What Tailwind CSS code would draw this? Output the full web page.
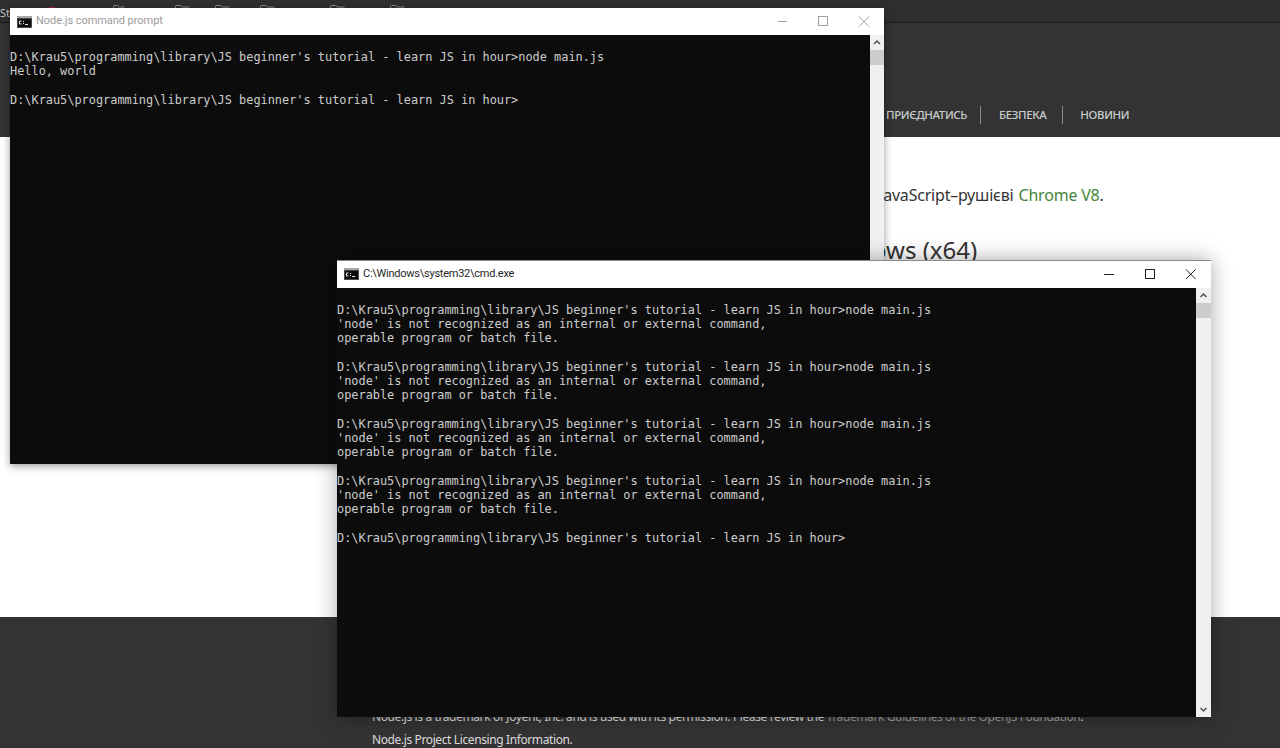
<!DOCTYPE html>
<html lang="en">
<head>
    <meta charset="UTF-8">
    <title>Node.js command prompt</title>
    <script src="https://cdn.jsdelivr.net/npm/@tailwindcss/browser@4"></script>
</head>
<body class="bg-white overflow-hidden">
    <div class="relative w-[1280px] h-[748px] overflow-hidden font-['Noto_Sans',sans-serif]">

        <!-- Browser page behind the windows -->
        <div class="flex flex-col h-full">
            <div class="relative h-[23px] flex-none bg-[#2f2f2f] border-b border-[#1a1a1a] text-[11px] text-[#c8c8c8] leading-[26px]">
                St
                <!-- bookmark bar icons, mostly cut off by the window -->
                <svg class="absolute left-0 top-0" width="480" height="9" viewBox="0 0 480 9" fill="none" stroke="#8f8f8f">
                    <path d="M46 9a6 3.500 0 0 1 11 0z" fill="#b5213a" stroke="none"/>
                    <path d="M113.500 9V6.500q0-1 1-1h3l2 1.500h5"/>
                    <path d="M175.500 9V6.500q0-1 1-1h4l2 1.500h7"/>
                    <path d="M215.500 9V6.500q0-1 1-1h4l2 1.500h7"/>
                    <path d="M260.500 9V6.500q0-1 1-1h4l2 1.500h7"/>
                    <path d="M330.500 9V6.500q0-1 1-1h4l2 1.500h7"/>
                    <path d="M390.500 9V6.500q0-1 1-1h4l2 1.500h7"/>
                </svg>
            </div>
            <header class="h-[114px] flex-none bg-[#333333] flex items-end pb-[13px] pl-[886px] text-[11.5px] tracking-[-0.4px] font-medium text-[#c9cdcd]">
                <span class="pr-[13px] leading-[18px]">ПРИЄДНАТИСЬ</span>
                <span class="pl-[18px] pr-[16px] border-l border-[#8a8a8a] leading-[18px]">БЕЗПЕКА</span>
                <span class="pl-[17px] border-l border-[#8a8a8a] leading-[18px]">НОВИНИ</span>
            </header>
            <main class="flex-1 pl-[886px] pt-[46px] text-[#333333]">
                <p class="-ml-[7px] text-[16px] leading-[24px] tracking-[-0.2px]">JavaScript–рушієві <span class="ml-[1px] text-[#43853d]">Chrome V8</span>.</p>
                <h2 class="-ml-[14px] mt-[28px] text-[24px] leading-[30px]">ows (x64)</h2>
            </main>
            <footer class="h-[131px] flex-none bg-[#333333] pl-[372px] pt-[90px] text-[12px] tracking-[-0.39px] text-[#dcdcdc]">
                <p class="leading-[20px]">Node.js is a trademark of Joyent, Inc. and is used with its permission. Please review the <span class="text-[#9a9a9a]">Trademark Guidelines of the OpenJS Foundation</span>.</p>
                <p class="mt-[3px] leading-[20px]">Node.js Project Licensing Information.</p>
            </footer>
        </div>

        <!-- Node.js command prompt window -->
        <section class="absolute left-[10px] top-[8px] w-[874px] h-[456px] flex flex-col shadow-[0_2px_8px_rgba(0,0,0,0.4)]">
            <div class="h-[27px] flex-none bg-white flex items-center pl-[7px]">
                <svg width="15" height="12" viewBox="0 0 15 12" class="flex-none"><rect width="15" height="12" fill="#4a4a4a"/><rect y="0" width="15" height="2" fill="#a8a8a8"/><rect x="1" y="3" width="13" height="8" fill="#0c0c0c"/><path d="M4.500 5h-2v3h2M6 5.500h1M6 7.500h1M8 8.500h3" stroke="#e8e8e8" fill="none"/></svg>
                <span class="ml-[4px] text-[11px] tracking-[-0.05px] text-[#9b9b9b] font-['Roboto',sans-serif]">Node.js command prompt</span>
                <div class="ml-auto flex items-center">
                    <svg width="46" height="27" viewBox="0 0 46 27"><path d="M17 13.500h9" stroke="#a0a0a0"/></svg>
                    <svg width="36" height="27" viewBox="0 0 36 27"><rect x="11.500" y="8.500" width="9" height="9" fill="none" stroke="#a0a0a0"/></svg>
                    <svg width="41" height="27" viewBox="0 0 41 27"><path d="M16 8.500l10 10M26 8.500l-10 10" stroke="#a0a0a0" fill="none"/></svg>
                </div>
            </div>
            <div class="flex-1 flex min-h-0">
                <pre class="flex-1 bg-[#0c0c0c] text-[#cccccc] font-['DejaVu_Sans_Mono',monospace] text-[11.9px] leading-[14.25px] pt-[15px]">D:\Krau5\programming\library\JS beginner's tutorial - learn JS in hour&gt;node main.js
Hello, world

D:\Krau5\programming\library\JS beginner's tutorial - learn JS in hour&gt;</pre>
                <div class="w-[14px] flex-none bg-[#f0f0f0] flex flex-col">
                    <svg width="14" height="15" viewBox="0 0 14 15"><path d="M4 9l3-3 3 3" fill="none" stroke="#505050" stroke-width="1.500"/></svg>
                    <div class="h-[15px] bg-[#cdcdcd]"></div>
                </div>
            </div>
        </section>

        <!-- cmd.exe window -->
        <section class="absolute left-[337px] top-[260px] w-[874px] h-[457px] flex flex-col shadow-[0_0_20px_rgba(0,0,0,0.35)] border-t border-[#8a8a8a]">
            <div class="h-[27px] flex-none bg-white flex items-center pl-[7px] pb-[1px]">
                <svg width="15" height="12" viewBox="0 0 15 12" class="flex-none"><rect width="15" height="12" fill="#4a4a4a"/><rect y="0" width="15" height="2" fill="#a8a8a8"/><rect x="1" y="3" width="13" height="8" fill="#0c0c0c"/><path d="M4.500 5h-2v3h2M6 5.500h1M6 7.500h1M8 8.500h3" stroke="#e8e8e8" fill="none"/></svg>
                <span class="ml-[4px] text-[11px] tracking-[-0.25px] text-[#1f1f1f] font-['Roboto',sans-serif]">C:\Windows\system32\cmd.exe</span>
                <div class="ml-auto flex items-center">
                    <svg width="46" height="27" viewBox="0 0 46 27"><path d="M16 13.500h10" stroke="#222"/></svg>
                    <svg width="36" height="27" viewBox="0 0 36 27"><rect x="11.500" y="8.500" width="9" height="9" fill="none" stroke="#222"/></svg>
                    <svg width="41" height="27" viewBox="0 0 41 27"><path d="M16 8.500l9.500 9.500M25.500 8.500l-9.500 9.500" stroke="#222" fill="none"/></svg>
                </div>
            </div>
            <div class="flex-1 flex min-h-0">
                <pre class="flex-1 bg-[#0c0c0c] text-[#cccccc] font-['DejaVu_Sans_Mono',monospace] text-[11.9px] leading-[14.25px] pt-[14.5px]">D:\Krau5\programming\library\JS beginner's tutorial - learn JS in hour&gt;node main.js
'node' is not recognized as an internal or external command,
operable program or batch file.

D:\Krau5\programming\library\JS beginner's tutorial - learn JS in hour&gt;node main.js
'node' is not recognized as an internal or external command,
operable program or batch file.

D:\Krau5\programming\library\JS beginner's tutorial - learn JS in hour&gt;node main.js
'node' is not recognized as an internal or external command,
operable program or batch file.

D:\Krau5\programming\library\JS beginner's tutorial - learn JS in hour&gt;node main.js
'node' is not recognized as an internal or external command,
operable program or batch file.

D:\Krau5\programming\library\JS beginner's tutorial - learn JS in hour&gt;</pre>
                <div class="w-[15px] flex-none bg-[#f0f0f0] flex flex-col">
                    <svg width="15" height="15" viewBox="0 0 15 15"><path d="M4.500 9l3-3 3 3" fill="none" stroke="#505050" stroke-width="1.500"/></svg>
                    <div class="h-[15px] bg-[#cdcdcd]"></div>
                    <svg class="mt-auto" width="15" height="15" viewBox="0 0 15 15"><path d="M4.500 6l3 3 3-3" fill="none" stroke="#505050" stroke-width="1.500"/></svg>
                </div>
            </div>
        </section>
    </div>
</body>
</html>
